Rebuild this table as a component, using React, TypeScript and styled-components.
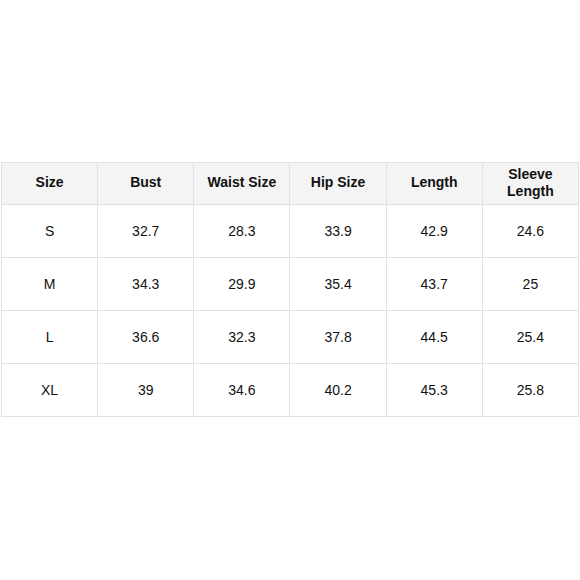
import styled, { createGlobalStyle } from "styled-components";

const GlobalStyle = createGlobalStyle`
  html, body {
    margin: 0;
    padding: 0;
    background: #ffffff;
  }
  body {
    font-family: "Liberation Sans", Arial, sans-serif;
  }
`;

const Page = styled.div`
  width: 580px;
  height: 579px;
  display: flex;
  align-items: center;
  justify-content: center;
`;

const Table = styled.table`
  width: 578px;
  border-collapse: collapse;
  table-layout: fixed;
  color: #111111;
  font-size: 14px;
`;

const HeadCell = styled.th`
  height: 39px;
  padding: 0 6px 2px;
  background: #f4f4f4;
  border: 1px solid #e2e2e2;
  font-weight: 700;
  line-height: 17px;
  text-align: center;
  vertical-align: middle;
`;

const Cell = styled.td`
  height: 51px;
  padding: 0 0 1px;
  border: 1px solid #e2e2e2;
  text-align: center;
  vertical-align: middle;
`;

const headers = ["Size", "Bust", "Waist Size", "Hip Size", "Length", "Sleeve Length"];

const rows = [
  ["S", "32.7", "28.3", "33.9", "42.9", "24.6"],
  ["M", "34.3", "29.9", "35.4", "43.7", "25"],
  ["L", "36.6", "32.3", "37.8", "44.5", "25.4"],
  ["XL", "39", "34.6", "40.2", "45.3", "25.8"],
];

const App: React.FC = () => {
  return (
    <>
      <GlobalStyle />
      <Page>
        <Table>
          <thead>
            <tr>
              {headers.map((h) => (
                <HeadCell key={h}>{h === "Sleeve Length" ? <>Sleeve<br />Length</> : h}</HeadCell>
              ))}
            </tr>
          </thead>
          <tbody>
            {rows.map((row) => (
              <tr key={row[0]}>
                {row.map((value, i) => (
                  <Cell key={i}>{value}</Cell>
                ))}
              </tr>
            ))}
          </tbody>
        </Table>
      </Page>
    </>
  );
};

export default App;
